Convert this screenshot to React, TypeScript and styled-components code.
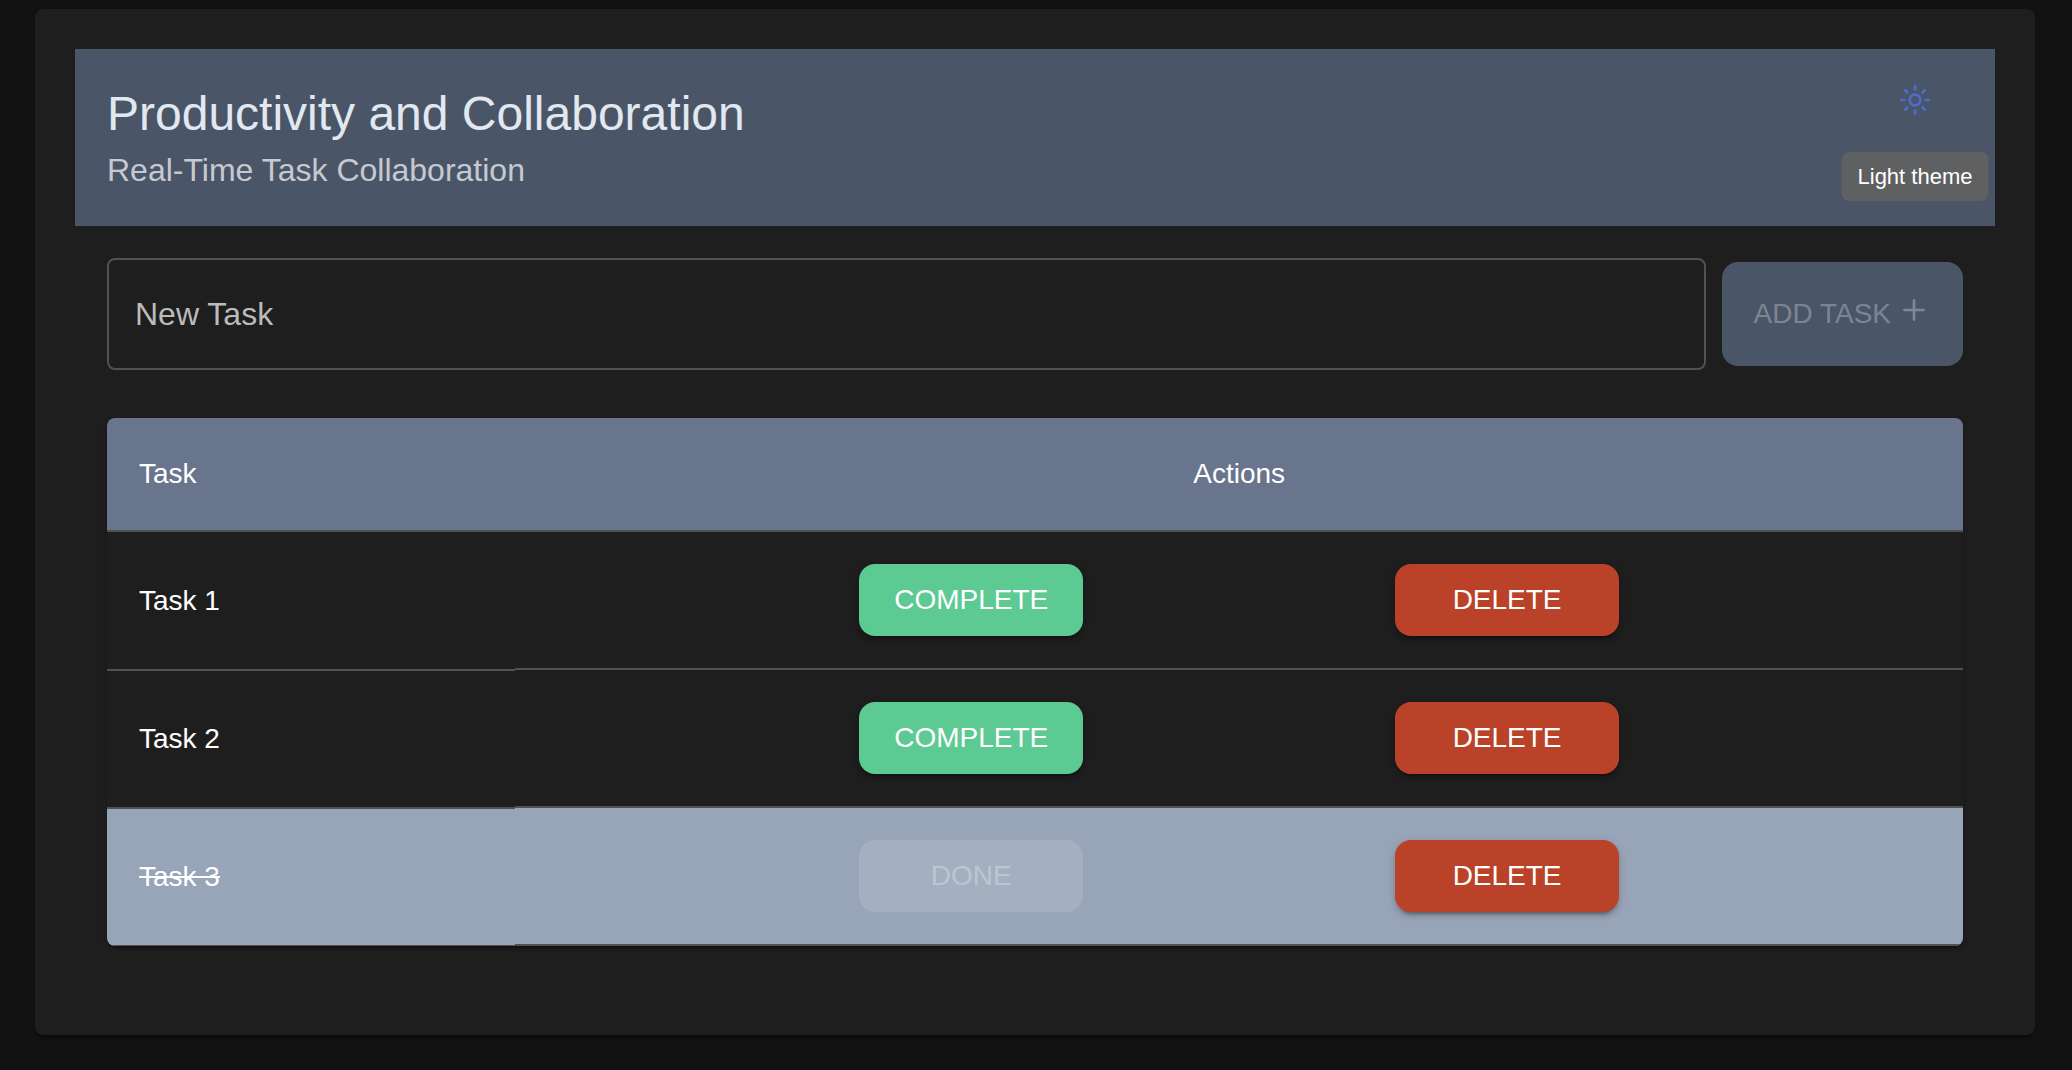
import { useState } from "react";
import type { FormEvent } from "react";
import styled, { createGlobalStyle } from "styled-components";
import { IoAdd, IoSunnyOutline } from "react-icons/io5";

const GlobalStyle = createGlobalStyle`
  *, *::before, *::after {
    box-sizing: border-box;
  }
  body {
    margin: 0;
    background: #121212;
    color: #fff;
    font-family: "Liberation Sans", Arial, Helvetica, sans-serif;
  }
  button, input {
    font-family: inherit;
  }
`;

const cardShadow = `
  0 4px 2px -2px rgba(0, 0, 0, 0.2),
  0 2px 2px 0 rgba(0, 0, 0, 0.14),
  0 2px 6px 0 rgba(0, 0, 0, 0.12)`;

const buttonShadow = `
  0 6px 2px -4px rgba(0, 0, 0, 0.2),
  0 4px 4px 0 rgba(0, 0, 0, 0.14),
  0 2px 10px 0 rgba(0, 0, 0, 0.12)`;

const Card = styled.main`
  margin: 9px 37px 35px 35px;
  padding: 40px;
  border-radius: 8px;
  background: #1e1e1e;
  box-shadow: ${cardShadow};
`;

const Header = styled.header`
  display: flex;
  justify-content: space-between;
  align-items: flex-start;
  padding: 32px;
  background: #4a5568;
`;

const Title = styled.h1`
  margin: 0;
  color: #e2e8f0;
  font-size: 48px;
  font-weight: 400;
  line-height: 65px;
`;

const Subtitle = styled.p`
  margin: 0;
  color: rgba(255, 255, 255, 0.7);
  font-size: 32px;
  line-height: 48px;
`;

const ThemeSwitch = styled.div`
  position: relative;
`;

const ThemeButton = styled.button`
  display: flex;
  align-items: center;
  justify-content: center;
  width: 96px;
  height: 38px;
  padding: 0;
  border: 0;
  background: transparent;
  color: #4a6fcb;
  font-size: 34px;
  cursor: pointer;

  svg * {
    stroke-width: 40px;
  }
`;

const Tooltip = styled.span`
  position: absolute;
  top: calc(100% + 33px);
  left: 50%;
  transform: translateX(-50%);
  padding: 8px 16px;
  border-radius: 8px;
  background: #5f6062;
  color: #fff;
  font-size: 22px;
  line-height: 33px;
  white-space: nowrap;
`;

const Content = styled.section`
  padding: 32px 32px 49px;
`;

const TaskForm = styled.form`
  display: flex;
  align-items: center;
  gap: 16px;
  margin-bottom: 48px;
`;

const TaskInput = styled.input`
  flex: 1;
  min-width: 0;
  height: 112px;
  padding: 0 26px;
  border: 2px solid #515151;
  border-radius: 8px;
  background: transparent;
  color: #fff;
  font-size: 32px;
  outline: none;

  &::placeholder {
    color: #bbb;
    opacity: 1;
  }
`;

const AddButton = styled.button`
  display: flex;
  align-items: center;
  gap: 6px;
  height: 104px;
  padding: 0 32px;
  border: 0;
  border-radius: 16px;
  background: #4a5568;
  color: #fff;
  font-size: 28px;
  white-space: nowrap;

  &:disabled {
    color: rgba(255, 255, 255, 0.3);
  }

  svg {
    margin-bottom: 8px;
    font-size: 34px;
  }

  svg * {
    stroke-width: 40px;
  }
`;

const TableCard = styled.div`
  overflow: hidden;
  border-radius: 8px;
  box-shadow: ${cardShadow};
`;

const Table = styled.table`
  width: 100%;
  border-spacing: 0;
  table-layout: fixed;
  font-size: 28px;
  line-height: 48px;
`;

const HeadCell = styled.th<{ $width?: string; $align?: string }>`
  width: ${({ $width }) => $width ?? "auto"};
  padding: 32px;
  border-bottom: 2px solid #515151;
  background: #68758c;
  font-weight: 400;
  text-align: ${({ $align }) => $align ?? "left"};
`;

const Row = styled.tr<{ $done: boolean }>`
  background: ${({ $done }) => ($done ? "#98a4b7" : "transparent")};
`;

const NameCell = styled.th<{ $done: boolean }>`
  padding: 32px;
  border-bottom: 1px solid #515151;
  color: #fff;
  font-weight: 400;
  text-align: left;
  text-decoration: ${({ $done }) => ($done ? "line-through" : "none")};

  tr + tr > & {
    border-top: 1px solid #515151;
  }
`;

const ActionsCell = styled.td`
  padding: 32px;
  border-bottom: 2px solid #515151;
`;

const Actions = styled.div`
  display: flex;
  justify-content: space-evenly;
`;

const ActionButton = styled.button<{ $color: string }>`
  width: 224px;
  height: 72px;
  padding: 0;
  border: 0;
  border-radius: 16px;
  background: ${({ $color }) => $color};
  color: #fff;
  font-size: 28px;
  box-shadow: ${buttonShadow};
  cursor: pointer;

  &:disabled {
    background: rgba(255, 255, 255, 0.12);
    color: rgba(255, 255, 255, 0.3);
    box-shadow: none;
    cursor: default;
  }
`;

interface Task {
  id: number;
  name: string;
  done: boolean;
}

const initialTasks: Task[] = [
  { id: 1, name: "Task 1", done: false },
  { id: 2, name: "Task 2", done: false },
  { id: 3, name: "Task 3", done: true },
];

export default function App() {
  const [tasks, setTasks] = useState(initialTasks);
  const [draft, setDraft] = useState("");

  const addTask = (event: FormEvent) => {
    event.preventDefault();
    if (!draft.trim()) return;
    setTasks([...tasks, { id: Date.now(), name: draft.trim(), done: false }]);
    setDraft("");
  };

  const completeTask = (id: number) =>
    setTasks(tasks.map((task) => (task.id === id ? { ...task, done: true } : task)));

  const deleteTask = (id: number) => setTasks(tasks.filter((task) => task.id !== id));

  return (
    <>
      <GlobalStyle />
      <Card>
        <Header>
          <div>
            <Title>Productivity and Collaboration</Title>
            <Subtitle>Real-Time Task Collaboration</Subtitle>
          </div>
          <ThemeSwitch>
            <ThemeButton type="button" aria-labelledby="theme-tooltip">
              <IoSunnyOutline aria-hidden />
            </ThemeButton>
            <Tooltip id="theme-tooltip" role="tooltip">
              Light theme
            </Tooltip>
          </ThemeSwitch>
        </Header>
        <Content>
          <TaskForm onSubmit={addTask}>
            <TaskInput
              type="text"
              aria-label="New Task"
              placeholder="New Task"
              value={draft}
              onChange={(event) => setDraft(event.target.value)}
            />
            <AddButton type="submit" disabled={!draft.trim()}>
              ADD TASK
              <IoAdd aria-hidden />
            </AddButton>
          </TaskForm>
          <TableCard>
            <Table>
              <thead>
                <tr>
                  <HeadCell scope="col" $width="22%">
                    Task
                  </HeadCell>
                  <HeadCell scope="col" $align="center">
                    Actions
                  </HeadCell>
                </tr>
              </thead>
              <tbody>
                {tasks.map((task) => (
                  <Row key={task.id} $done={task.done}>
                    <NameCell scope="row" $done={task.done}>
                      {task.name}
                    </NameCell>
                    <ActionsCell>
                      <Actions>
                        <ActionButton
                          type="button"
                          $color="#5dc993"
                          disabled={task.done}
                          onClick={() => completeTask(task.id)}
                        >
                          {task.done ? "DONE" : "COMPLETE"}
                        </ActionButton>
                        <ActionButton
                          type="button"
                          $color="#ba4228"
                          onClick={() => deleteTask(task.id)}
                        >
                          DELETE
                        </ActionButton>
                      </Actions>
                    </ActionsCell>
                  </Row>
                ))}
              </tbody>
            </Table>
          </TableCard>
        </Content>
      </Card>
    </>
  );
}
